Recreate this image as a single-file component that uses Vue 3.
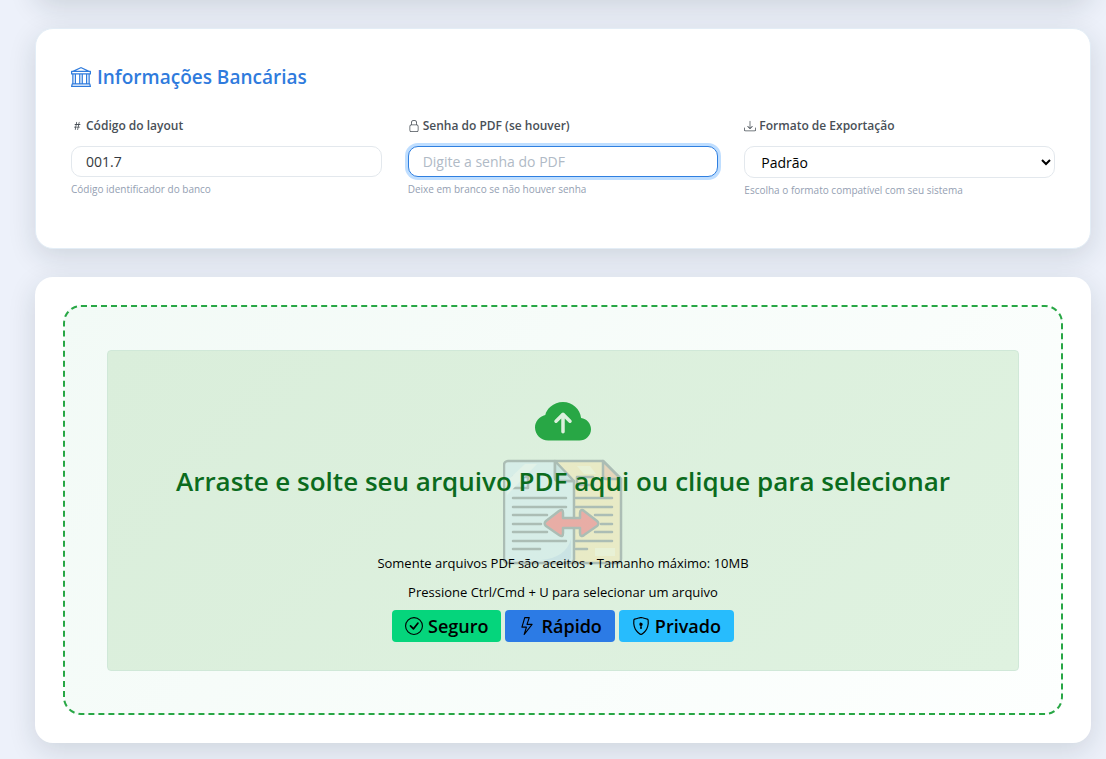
<template>
  <main class="page">
    <section class="card card--previous" aria-hidden="true"></section>

    <!-- Bank information -->
    <section class="card card--bank">
      <h2 class="card__title">
        <svg class="icon" viewBox="0 0 16 16" aria-hidden="true"><path :d="icons.bank" /></svg>
        Informações Bancárias
      </h2>

      <div class="fields">
        <div class="field">
          <label class="field__label" for="layout">
            <svg class="icon" viewBox="0 0 16 16" aria-hidden="true"><path :d="icons.hash" /></svg>
            Código do layout
          </label>
          <input id="layout" v-model="layout" class="field__control" type="text" @focus="active = 'layout'" />
          <small class="field__help">Código identificador do banco</small>
        </div>

        <div class="field">
          <label class="field__label" for="senha">
            <svg class="icon" viewBox="0 0 16 16" aria-hidden="true"><path :d="icons.lock" /></svg>
            Senha do PDF (se houver)
          </label>
          <input
            id="senha"
            v-model="password"
            class="field__control"
            :class="{ 'field__control--active': active === 'senha' }"
            type="password"
            placeholder="Digite a senha do PDF"
            @focus="active = 'senha'"
            @blur="active = ''"
          />
          <small class="field__help">Deixe em branco se não houver senha</small>
        </div>

        <div class="field">
          <label class="field__label" for="formato">
            <svg class="icon" viewBox="0 0 16 16" aria-hidden="true"><path :d="icons.download" /></svg>
            Formato de Exportação
          </label>
          <select id="formato" v-model="format" class="field__control field__control--select" @focus="active = 'formato'">
            <option value="padrao">Padrão</option>
          </select>
          <small class="field__help">Escolha o formato compatível com seu sistema</small>
        </div>
      </div>
    </section>

    <!-- Upload -->
    <section class="card card--upload">
      <div class="dropzone">
        <label class="dropzone__area" for="arquivo">
          <input id="arquivo" class="dropzone__input" type="file" accept="application/pdf" />

          <!-- Watermark: two documents and a double arrow -->
          <svg class="dropzone__mark" viewBox="0 0 120 120" aria-hidden="true">
            <g stroke="#52616b" stroke-width="2.5" stroke-linejoin="round" stroke-linecap="round">
              <path d="M53 10h47l18 18v80a4 4 0 0 1-4 4H71z" fill="#ffe09a" />
              <path d="M100 10v15a3 3 0 0 0 3 3h15z" fill="#f3a67c" />
              <path d="M5 10h47v17a3 3 0 0 0 3 3h16v78a4 4 0 0 1-4 4H5a4 4 0 0 1-4-4V14a4 4 0 0 1 4-4z" fill="#cdeafa" />
              <path d="M52 10l19 20H55a3 3 0 0 1-3-3z" fill="#a9cfe4" />
              <path d="M10 26h15v11H10zM74 26h16v8H74z" fill="none" />
              <path
                d="M10 47h53M10 56h53M10 64h34M10 73h28M10 81h34M10 90h53M10 98h27M73 47h36M73 56h36M92 64h17M98 73h11M92 81h17M73 90h36M73 98h11"
                fill="none"
              />
              <path
                d="M43 70l13-10c3-2 4-1 4 2v5h17v-5c0-3 2-4 4-2l13 10c2 2 2 3 0 5L81 84c-2 2-4 1-4-2v-5H60v5c0 3-1 4-4 2L43 75c-2-2-2-3 0-5z"
                fill="#ff3440"
              />
            </g>
            <path d="M74 15h13l6 8H81zM92 97h20v8H92z" fill="#fff3c9" />
            <path d="M4 30L22 13h12L4 44z" fill="#eef8fd" />
            <path d="M68 88v18a3 3 0 0 1-3 3H38c16-1 27-9 30-21z" fill="#a9cdf0" />
          </svg>

          <svg class="icon dropzone__cloud" viewBox="0 0 16 16" aria-hidden="true"><path :d="icons.cloud" /></svg>
          <strong class="dropzone__title">Arraste e solte seu arquivo PDF aqui ou clique para selecionar</strong>
          <span class="dropzone__text">Somente arquivos PDF são aceitos • Tamanho máximo: 10MB</span>
          <span class="dropzone__text">Pressione Ctrl/Cmd + U para selecionar um arquivo</span>

          <span class="badges">
            <span v-for="badge in badges" :key="badge.text" class="badge" :class="`badge--${badge.kind}`">
              <svg class="icon" viewBox="0 0 16 16" aria-hidden="true"><path :d="icons[badge.icon]" /></svg>
              {{ badge.text }}
            </span>
          </span>
        </label>
      </div>
    </section>
  </main>
</template>

<script setup>
import { ref } from 'vue'

const layout = ref('001.7')
const password = ref('')
const format = ref('padrao')
const active = ref('senha')

const badges = [
  { text: 'Seguro', kind: 'success', icon: 'check' },
  { text: 'Rápido', kind: 'primary', icon: 'lightning' },
  { text: 'Privado', kind: 'info', icon: 'shield' },
]

const icons = {
  bank: 'm8 0 6.61 3h.89a.5.5 0 0 1 .5.5v2a.5.5 0 0 1-.5.5H15v7a.5.5 0 0 1 .485.38l.5 2a.498.498 0 0 1-.485.62H.5a.498.498 0 0 1-.485-.62l.5-2A.5.5 0 0 1 1 13V6H.5a.5.5 0 0 1-.5-.5v-2A.5.5 0 0 1 .5 3h.89zM3.777 3h8.447L8 1zM2 6v7h1V6zm2 0v7h2.5V6zm3.5 0v7h1V6zm2 0v7H12V6zM13 6v7h1V6zm2-1V4H1v1zm-.39 9H1.39l-.25 1h13.72z',
  hash: 'M8.39 12.648a1 1 0 0 0-.015.18c0 .305.21.508.5.508.266 0 .492-.172.555-.477l.554-2.703h1.204c.421 0 .617-.234.617-.547 0-.312-.188-.53-.617-.53h-.985l.516-2.524h1.265c.43 0 .618-.227.618-.547 0-.313-.188-.524-.618-.524h-1.046l.476-2.304a1 1 0 0 0 .016-.164.51.51 0 0 0-.516-.516.54.54 0 0 0-.539.43l-.523 2.554H7.617l.477-2.304c.008-.04.015-.118.015-.164a.51.51 0 0 0-.523-.516.54.54 0 0 0-.531.43L6.53 5.484H5.414c-.43 0-.617.22-.617.532s.187.539.617.539h.906l-.515 2.523H4.609c-.421 0-.609.219-.609.531s.188.547.61.547h.976l-.516 2.492c-.008.04-.015.125-.015.18 0 .305.21.508.5.508.265 0 .492-.172.554-.477l.555-2.703h2.242zm-1-6.109h2.266l-.515 2.563H6.859l.532-2.563z',
  lock: 'M8 0a4 4 0 0 1 4 4v2.05a2.5 2.5 0 0 1 2 2.45v5a2.5 2.5 0 0 1-2.5 2.5h-7A2.5 2.5 0 0 1 2 13.5v-5a2.5 2.5 0 0 1 2-2.45V4a4 4 0 0 1 4-4M4.5 7A1.5 1.5 0 0 0 3 8.5v5A1.5 1.5 0 0 0 4.5 15h7a1.5 1.5 0 0 0 1.5-1.5v-5A1.5 1.5 0 0 0 11.5 7zM8 1a3 3 0 0 0-3 3v2h6V4a3 3 0 0 0-3-3',
  download: 'M.5 9.9a.5.5 0 0 1 .5.5v2.5a1 1 0 0 0 1 1h12a1 1 0 0 0 1-1v-2.5a.5.5 0 0 1 1 0v2.5a2 2 0 0 1-2 2H2a2 2 0 0 1-2-2v-2.5a.5.5 0 0 1 .5-.5M7.646 11.854a.5.5 0 0 0 .708 0l3-3a.5.5 0 0 0-.708-.708L8.5 10.293V1.5a.5.5 0 0 0-1 0v8.793L5.354 8.146a.5.5 0 1 0-.708.708z',
  cloud: 'M8 2a5.53 5.53 0 0 0-3.594 1.342c-.766.66-1.321 1.52-1.464 2.383C1.266 6.095 0 7.555 0 9.318 0 11.366 1.708 13 3.781 13h8.906C14.502 13 16 11.57 16 9.773c0-1.636-1.242-2.969-2.834-3.194C12.923 3.999 10.69 2 8 2m2.354 5.146a.5.5 0 0 1-.708.708L8.5 6.707V10.5a.5.5 0 0 1-1 0V6.707L6.354 7.854a.5.5 0 1 1-.708-.708l2-2a.5.5 0 0 1 .708 0z',
  check: 'M8 15A7 7 0 1 1 8 1a7 7 0 0 1 0 14m0 1A8 8 0 1 0 8 0a8 8 0 0 0 0 16M10.97 4.97l-.02.022-3.473 4.425-2.093-2.094a.75.75 0 0 0-1.06 1.06L6.97 11.03a.75.75 0 0 0 1.079-.02l3.992-4.99a.75.75 0 0 0-1.071-1.05',
  lightning: 'M5.52.359A.5.5 0 0 1 6 0h4a.5.5 0 0 1 .474.658L8.694 6H12.5a.5.5 0 0 1 .395.807l-7 9a.5.5 0 0 1-.873-.454L6.823 9.5H3.5a.5.5 0 0 1-.48-.641zM6.374 1 4.168 8.5H7.5a.5.5 0 0 1 .478.647L6.78 13.04 11.478 7H8a.5.5 0 0 1-.474-.658L9.306 1z',
  shield: 'M5.338 1.59a61 61 0 0 0-2.837.856.48.48 0 0 0-.328.39c-.554 4.157.726 7.19 2.253 9.188a10.7 10.7 0 0 0 2.287 2.233c.346.244.652.42.893.533q.18.085.293.118a1 1 0 0 0 .101.025 1 1 0 0 0 .1-.025q.114-.034.294-.118c.24-.113.547-.29.893-.533a10.7 10.7 0 0 0 2.287-2.233c1.527-1.997 2.807-5.031 2.253-9.188a.48.48 0 0 0-.328-.39c-.651-.213-1.75-.56-2.837-.855C9.552 1.29 8.531 1.067 8 1.067c-.53 0-1.552.223-2.662.524zM5.072.56C6.157.265 7.31 0 8 0s1.843.265 2.928.56c1.11.3 2.229.655 2.887.87a1.54 1.54 0 0 1 1.044 1.262c.596 4.477-.787 7.795-2.465 9.99a11.8 11.8 0 0 1-2.517 2.453 7 7 0 0 1-1.048.625c-.28.132-.581.24-.829.24s-.548-.108-.829-.24a7 7 0 0 1-1.048-.625 11.8 11.8 0 0 1-2.517-2.453C1.928 10.487.545 7.169 1.141 2.692A1.54 1.54 0 0 1 2.185 1.43 63 63 0 0 1 5.072.56M9.5 6.5a1.5 1.5 0 0 1-1 1.415l.385 1.99a.5.5 0 0 1-.491.595h-.788a.5.5 0 0 1-.49-.595l.384-1.99a1.5 1.5 0 1 1 2-1.415',
}
</script>

<style>
body {
  margin: 0;
  background: #edf1fa;
}
</style>

<style scoped>
.page {
  display: flex;
  flex-direction: column;
  gap: 28px;
  padding: 0 15px 28px 35px;
  overflow: hidden;
  font-family: 'Segoe UI', 'Open Sans', 'Noto Sans', sans-serif;
  font-size: 13px;
  color: #000;
}

.page * {
  box-sizing: border-box;
}

.icon {
  flex-shrink: 0;
  width: 1em;
  height: 1em;
  fill: currentColor;
}

/* ─── Cards ───────────────────────────────────────────────── */
.card {
  background: #fff;
  border-radius: 18px;
  box-shadow: 0 8px 28px rgba(20, 40, 50, 0.14);
}

.card--previous {
  height: 60px;
  margin-top: -60px;
}

.card--bank {
  padding: 35px 35px 50px;
  border: 1px solid #e3edf6;
}

.card--upload {
  padding: 28px;
}

.card__title {
  display: flex;
  align-items: center;
  gap: 6px;
  margin: 0 0 28px;
  font-size: 19px;
  font-weight: 600;
  line-height: 26px;
  color: #2f7bdd;
}

.card__title .icon {
  width: 20px;
  height: 20px;
}

/* ─── Fields ──────────────────────────────────────────────── */
.fields {
  display: grid;
  grid-template-columns: repeat(3, 1fr);
  gap: 26px;
}

.field {
  display: flex;
  flex-direction: column;
}

.field__label {
  display: flex;
  align-items: center;
  gap: 3px;
  margin-bottom: 12px;
  font-size: 12px;
  font-weight: 600;
  line-height: 16px;
  color: #495057;
}

.field__control {
  width: 100%;
  height: 31px;
  padding: 0 14px;
  border: 1px solid #e3e8ed;
  border-radius: 10px;
  background: #fff;
  font-family: inherit;
  font-size: 14px;
  color: #343a40;
  outline: none;
}

.field__control::placeholder {
  color: #b0bac6;
  opacity: 1;
}

.field__control--active {
  border-color: #2f7fe0;
  box-shadow: 0 0 0 3px rgba(0, 123, 255, 0.25);
}

.field__control--select {
  height: 32px;
  padding: 0 0 0 12px;
  color: #000;
}

.field__help {
  margin-top: 4px;
  font-size: 10px;
  line-height: 16px;
  color: #94a0b2;
}

/* ─── Dropzone ────────────────────────────────────────────── */
.dropzone {
  padding: 43px 42px 42px;
  border: 2px dashed #28a745;
  border-radius: 18px;
  background: linear-gradient(135deg, #f2faf6, #fdfffe);
}

.dropzone__area {
  position: relative;
  display: flex;
  flex-direction: column;
  align-items: center;
  padding: 44px 24px 28px;
  border: 1px solid #d0e8d8;
  border-radius: 4px;
  background: linear-gradient(135deg, #daeedb, #dff2e0);
  cursor: pointer;
}

.dropzone__input {
  position: absolute;
  width: 1px;
  height: 1px;
  opacity: 0;
}

.dropzone__mark {
  position: absolute;
  top: 50%;
  left: 50%;
  width: 120px;
  height: 120px;
  transform: translate(-50%, -50%);
  opacity: 0.35;
}

.dropzone__cloud {
  font-size: 56px;
  color: #28a745;
}

.dropzone__title {
  position: relative;
  margin: 11px 0 52px;
  font-size: 26px;
  font-weight: 600;
  line-height: 38px;
  text-align: center;
  color: #0b6b1d;
}

.dropzone__text {
  position: relative;
  margin-bottom: 6px;
  line-height: 23px;
}

/* ─── Badges ──────────────────────────────────────────────── */
.badges {
  display: flex;
  flex-wrap: wrap;
  gap: 4px;
}

.badge {
  display: flex;
  align-items: center;
  gap: 5px;
  padding: 0 13px;
  border-radius: 4px;
  font-size: 18px;
  font-weight: 600;
  line-height: 32px;
}

.badge--success {
  background: #05d57c;
}

.badge--primary {
  background: #2c7be5;
}

.badge--info {
  background: #27bcfd;
}
</style>
